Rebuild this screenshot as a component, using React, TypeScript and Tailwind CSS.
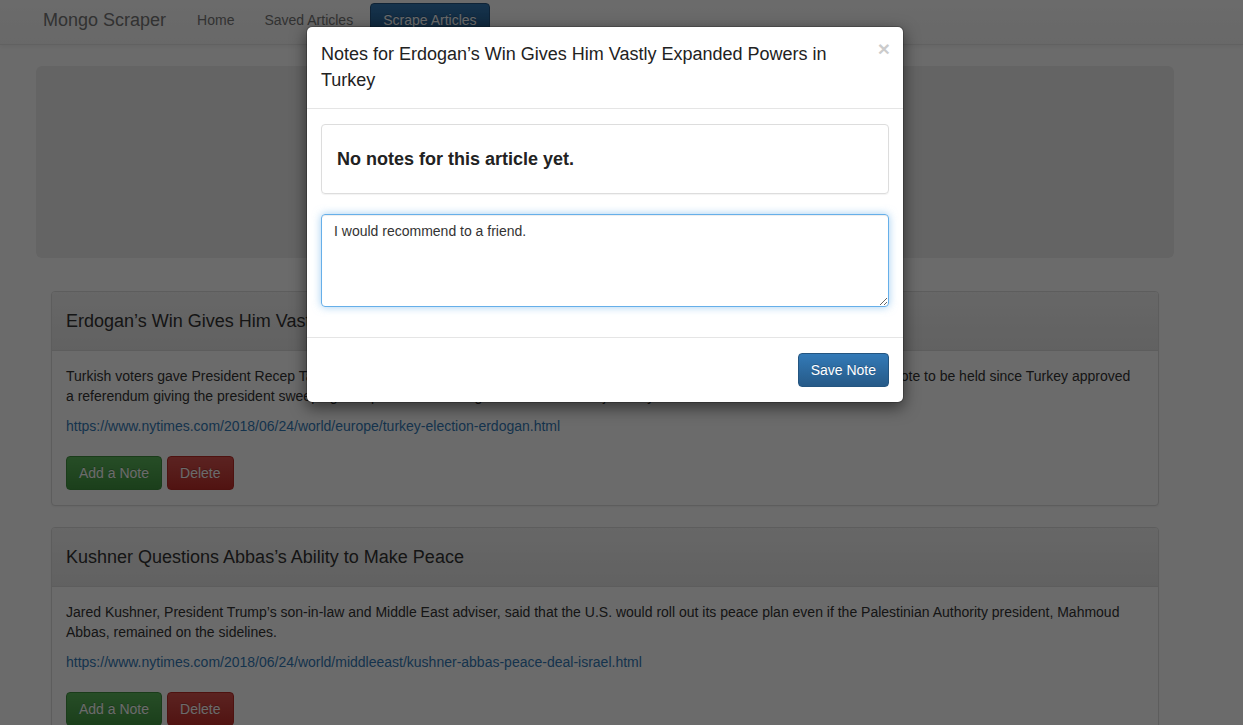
import React from 'react';

const articles = [
  {
    title: 'Erdogan’s Win Gives Him Vastly Expanded Powers in Turkey',
    lines: [
      'Turkish voters gave President Recep Tayyip Erdogan a new five-year term on Sunday, in the first snap presidential and parliamentary vote to be held since Turkey approved',
      'a referendum giving the president sweeping new powers over the government and the judiciary.',
    ],
    url: 'https://www.nytimes.com/2018/06/24/world/europe/turkey-election-erdogan.html',
  },
  {
    title: 'Kushner Questions Abbas’s Ability to Make Peace',
    lines: [
      'Jared Kushner, President Trump’s son-in-law and Middle East adviser, said that the U.S. would roll out its peace plan even if the Palestinian Authority president, Mahmoud',
      'Abbas, remained on the sidelines.',
    ],
    url: 'https://www.nytimes.com/2018/06/24/world/middleeast/kushner-abbas-peace-deal-israel.html',
  },
];

const btn = 'inline-block h-[34px] px-[12px] rounded-[4px] border text-[14px] leading-[20px] text-white [text-shadow:0_-1px_0_rgba(0,0,0,0.2)]';

export default function App() {
  return (
    <div className="relative h-[725px] overflow-hidden bg-white font-['Liberation_Sans',Arial,sans-serif] text-[14px] leading-[20px] text-[#333]">
      {/* Navbar */}
      <nav className="h-[45px] border-b border-[#e7e7e7] bg-gradient-to-b from-white to-[#f8f8f8] shadow-[0_1px_5px_rgba(0,0,0,0.075)]">
        <div className="flex items-start pl-[43px]">
          <span className="mt-[7px] text-[18px] leading-[26px] text-[#777]">Mongo Scraper</span>
          <div className="ml-[16px] flex items-start">
            <a className="mt-[10px] px-[15px] text-[#777]">Home</a>
            <a className="mt-[10px] px-[15px] text-[#777]">Saved Articles</a>
            <button className={`${btn} ml-[2px] mt-[3px] border-[#245580] bg-gradient-to-b from-[#337ab7] to-[#265a88]`}>
              Scrape Articles
            </button>
          </div>
        </div>
      </nav>

      {/* Jumbotron */}
      <div className="ml-[36px] mt-[21px] h-[192px] w-[1138px] rounded-[6px] bg-[#eee]" />

      {/* Article panels */}
      <div className="ml-[51px] mt-[33px] flex w-[1108px] flex-col gap-[21px]">
        {articles.map(a => (
          <div key={a.url} className="rounded-[4px] border border-[#ddd] bg-white shadow-[0_1px_2px_rgba(0,0,0,0.05)]">
            <div className="flex h-[59px] items-center rounded-t-[3px] border-b border-[#ddd] bg-gradient-to-b from-[#f5f5f5] to-[#e8e8e8] px-[14px] text-[18px] text-[#333]">
              {a.title}
            </div>
            <div className="px-[14px] py-[15px]">
              <p className="mb-[10px]">
                <span className="whitespace-nowrap">{a.lines[0]}</span>
                <br />
                {a.lines[1]}
              </p>
              <p className="mb-[20px]">
                <a className="text-[#337ab7]">{a.url}</a>
              </p>
              <div className="flex gap-[5px]">
                <button className={`${btn} border-[#3e8f3e] bg-gradient-to-b from-[#5cb85c] to-[#419641]`}>Add a Note</button>
                <button className={`${btn} border-[#b92c28] bg-gradient-to-b from-[#d9534f] to-[#c12e2a]`}>Delete</button>
              </div>
            </div>
          </div>
        ))}
      </div>

      {/* Backdrop */}
      <div className="absolute inset-0 bg-[rgba(0,0,0,0.58)]" />

      {/* Modal */}
      <div className="absolute left-[306px] top-[26px] w-[598px] rounded-[6px] border border-black/20 bg-white bg-clip-padding shadow-[0_5px_15px_rgba(0,0,0,0.5)]">
        <div className="flex items-start border-b border-[#e5e5e5] px-[14px] py-[15px]">
          <h4 className="flex-1 pr-[20px] text-[18px] leading-[25.7px] font-medium text-[#222]">
            Notes for Erdogan’s Win Gives Him Vastly Expanded Powers in Turkey
          </h4>
          <span className="-mr-[1px] -mt-[4px] text-[21px] leading-[21px] font-bold text-black opacity-20">×</span>
        </div>
        <div className="px-[14px] py-[15px]">
          <div className="flex h-[70px] items-center rounded-[4px] border border-[#ddd] px-[15px] shadow-[0_1px_1px_rgba(0,0,0,0.05)]">
            <h4 className="text-[18px] font-bold text-[#222]">No notes for this article yet.</h4>
          </div>
          <textarea
            readOnly
            defaultValue="I would recommend to a friend."
            className="mt-[20px] mb-[15px] block h-[93px] w-full rounded-[4px] border border-[#66afe9] px-[12px] py-[6px] text-[14px] leading-[20px] text-[#333] shadow-[inset_0_1px_1px_rgba(0,0,0,0.075),0_0_8px_rgba(102,175,233,0.6)] outline-none"
          />
        </div>
        <div className="flex justify-end border-t border-[#e5e5e5] px-[14px] py-[15px]">
          <button className={`${btn} border-[#245580] bg-gradient-to-b from-[#337ab7] to-[#265a88]`}>Save Note</button>
        </div>
      </div>
    </div>
  );
}
